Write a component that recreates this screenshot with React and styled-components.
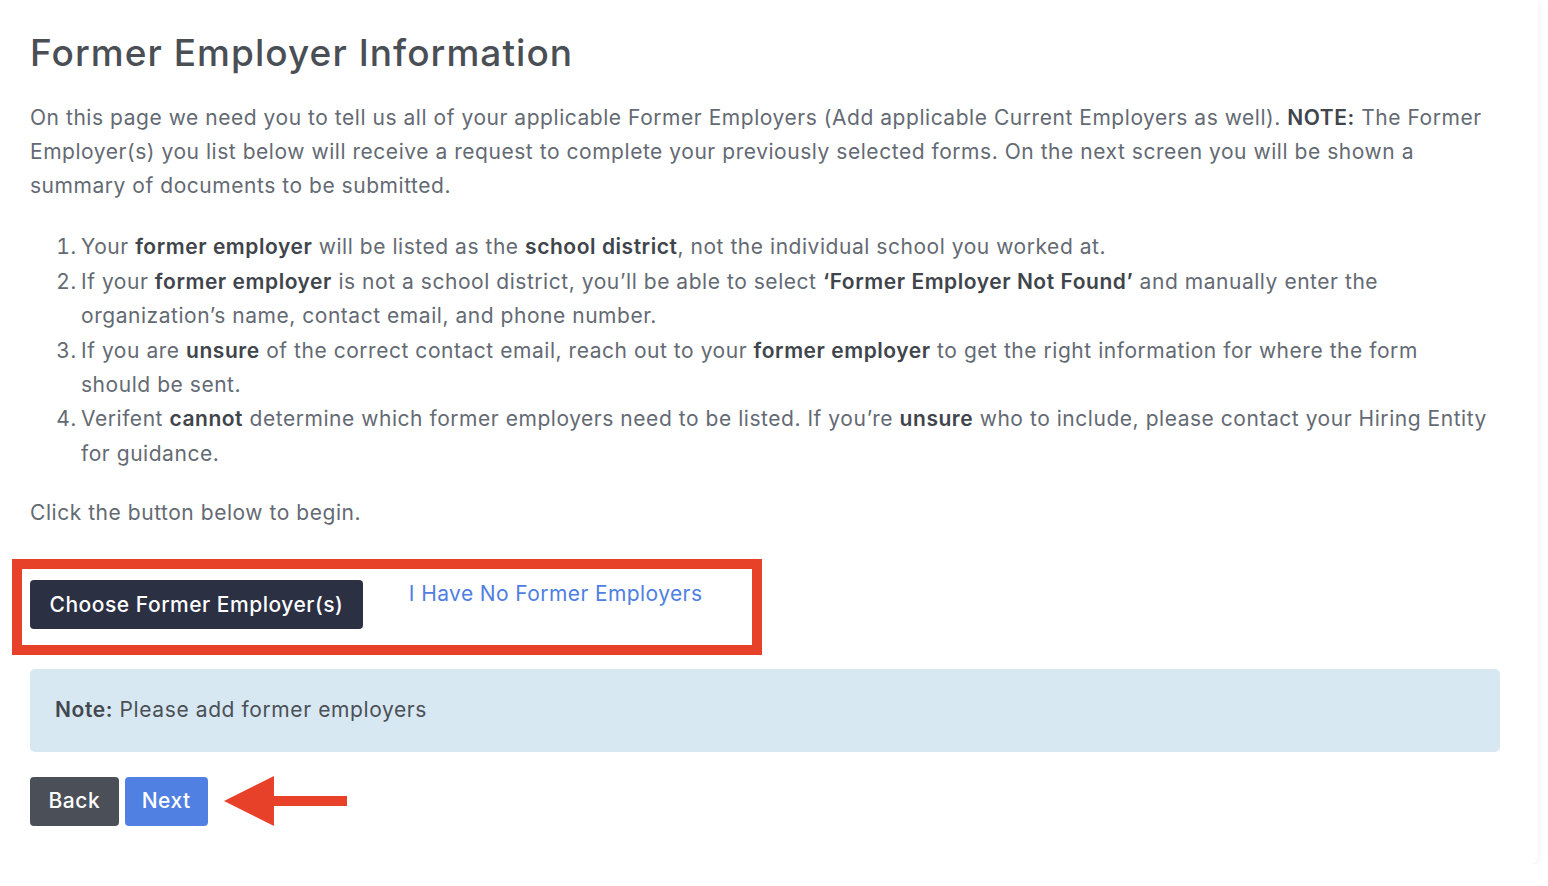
import React from "react";
import styled, { createGlobalStyle } from "styled-components";

const GlobalStyle = createGlobalStyle`
  html, body {
    margin: 0;
    padding: 0;
    background: #ffffff;
  }
  body {
    font-family: "Inter", "Open Sans", sans-serif;
    -webkit-font-smoothing: antialiased;
  }
`;

const Card = styled.main`
  width: 1538px;
  box-sizing: border-box;
  padding: 31px 38px 38px 30px;
  background: #ffffff;
  border-radius: 0 0 8px 0;
  box-shadow: 0 2px 8px rgba(0, 0, 0, 0.07);
`;

const Title = styled.h1`
  margin: 0;
  font-size: 37px;
  line-height: 44.4px;
  font-weight: 500;
  letter-spacing: 1.05px;
  color: #4a4e55;
`;

const Body = styled.div`
  max-width: 1458px;
  font-size: 21px;
  line-height: 34.4px;
  letter-spacing: 0.54px;
  color: #646a73;

  strong {
    font-weight: 600;
    color: #40444b;
  }
`;

const Para = styled.p`
  margin: ${(p) => p.$top || 0}px 0 0 0;
`;

const List = styled.ol`
  margin: 26.5px 0 0 0;
  padding-left: 51px;

  li::marker {
    content: counter(list-item) ".\\2009";
    color: #646a73;
  }
`;

const Annotated = styled.div`
  margin: 29px 0 0 -18px;
  width: 750px;
  box-sizing: border-box;
  border: 10px solid #e8412a;
  padding: 11px 8px 16px;
  display: flex;
  align-items: flex-start;
  gap: 46px;
`;

const Button = styled.button`
  height: 49px;
  padding: 0 ${(p) => p.$px || 19}px;
  border: none;
  border-radius: 4px;
  background: ${(p) => p.$bg};
  color: #ffffff;
  font-family: "Inter", "Open Sans", sans-serif;
  font-size: 21px;
  font-weight: 500;
  letter-spacing: 0.52px;
  line-height: 24px;
  display: inline-flex;
  align-items: center;
  cursor: pointer;
`;

const LinkText = styled.a`
  margin-top: 2px;
  font-size: 21px;
  line-height: 24px;
  letter-spacing: 0.4px;
  color: #4f80e1;
  text-decoration: none;
  cursor: pointer;
`;

const Alert = styled.div`
  margin-top: 13.5px;
  box-sizing: border-box;
  width: 1470px;
  height: 83px;
  padding: 24px 25px 0;
  background: #d7e8f2;
  border-radius: 5px;
  font-size: 21px;
  line-height: 34.4px;
  letter-spacing: 0.6px;
  color: #4b5057;

  strong {
    font-weight: 600;
    color: #43474e;
  }
`;

const Actions = styled.div`
  margin-top: 24.5px;
  display: flex;
  align-items: center;
  gap: 6px;
`;

const Arrow = styled.svg`
  margin-left: 10px;
  flex: none;
`;

export default function App() {
  return (
    <>
      <GlobalStyle />
      <Card>
        <Title>Former Employer Information</Title>
        <Body>
          <Para $top={25.2}>
            On this page we need you to tell us all of your applicable Former
            Employers (Add applicable Current Employers as well).{" "}
            <strong>NOTE:</strong> The Former Employer(s) you list below will
            receive a request to complete your previously selected forms. On
            the next screen you will be shown a summary of documents to be
            submitted.
          </Para>
          <List>
            <li>
              Your <strong>former employer</strong> will be listed as the{" "}
              <strong>school district</strong>, not the individual school you
              worked at.
            </li>
            <li>
              If your <strong>former employer</strong> is not a school
              district, you’ll be able to select{" "}
              <strong>‘Former Employer Not Found’</strong> and manually enter
              the organization’s name, contact email, and phone number.
            </li>
            <li>
              If you are <strong>unsure</strong> of the correct contact email,
              reach out to your <strong>former employer</strong> to get the
              right information for where the form should be sent.
            </li>
            <li>
              Verifent <strong>cannot</strong> determine which former employers
              need to be listed. If you’re <strong>unsure</strong> who to
              include, please contact your Hiring Entity for guidance.
            </li>
          </List>
          <Para $top={24.5}>Click the button below to begin.</Para>
        </Body>

        <Annotated>
          <Button $bg="#2b3043" $px={19.5}>
            Choose Former Employer(s)
          </Button>
          <LinkText>I Have No Former Employers</LinkText>
        </Annotated>

        <Alert>
          <strong>Note:</strong> Please add former employers
        </Alert>

        <Actions>
          <Button $bg="#4b4f57" $px={18.5}>Back</Button>
          <Button $bg="#5080e2" $px={17}>Next</Button>
          <Arrow width="124" height="50" viewBox="0 0 124 50" aria-hidden="true">
            <polygon points="0,25 50,0 50,20 123,20 123,30 50,30 50,50" fill="#e8412a" />
          </Arrow>
        </Actions>
      </Card>
    </>
  );
}
